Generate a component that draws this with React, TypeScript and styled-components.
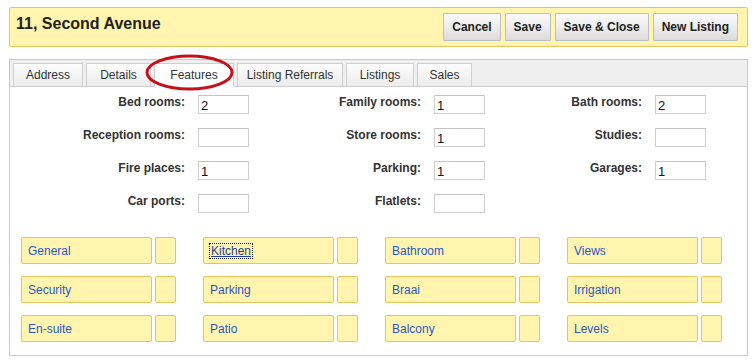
import React from "react";
import styled, { createGlobalStyle } from "styled-components";

const Global = createGlobalStyle`
  html, body { margin: 0; padding: 0; background: #fff; }
  body { font-family: "Liberation Sans", Arial, sans-serif; color: #222; }
  * { box-sizing: border-box; }
`;

const Page = styled.div`
  width: 755px;
  height: 362px;
  padding: 7px 7px 0 9px;
  display: flex;
  flex-direction: column;
`;

const Header = styled.div`
  height: 40px;
  background: #fff5ae;
  border: 1px solid #e8c45e;
  border-radius: 2px;
  display: flex;
  align-items: flex-start;
  justify-content: space-between;
  padding: 5px 9px 0 6px;
`;

const Title = styled.h1`
  margin: 0;
  padding-top: 2px;
  font-size: 16px;
  font-weight: bold;
  color: #222;
`;

const ButtonBar = styled.div`
  display: flex;
  gap: 4px;
`;

const Button = styled.button`
  height: 28px;
  padding: 0 8px;
  font-family: "Liberation Sans", Arial, sans-serif;
  font-size: 12px;
  font-weight: bold;
  color: #222;
  background: linear-gradient(#fbfbfb, #e9e9e9 60%, #dcdcdc);
  border: 1px solid #b9c0c9;
  border-radius: 1px;
`;

const Panel = styled.div`
  margin-top: 12px;
  border: 1px solid #c9c9c9;
  flex: 0 0 297px;
  display: flex;
  flex-direction: column;
`;

const TabStrip = styled.div`
  background: #efefef;
  border-bottom: 1px solid #cfcfcf;
  height: 27px;
  display: flex;
  align-items: flex-end;
  gap: 3px;
  padding-left: 3px;
`;

const Tab = styled.div<{ $active?: boolean; $w: number }>`
  position: relative;
  width: ${(p) => p.$w}px;
  height: 24px;
  margin-bottom: -1px;
  display: flex;
  align-items: center;
  justify-content: center;
  font-size: 12px;
  color: #333;
  border: 1px solid #cfcfcf;
  border-bottom: ${(p) => (p.$active ? "1px solid #fff" : "1px solid #cfcfcf")};
  background: ${(p) => (p.$active ? "#fff" : "linear-gradient(#fdfdfd, #ececec)")};
`;

const Ring = styled.svg`
  position: absolute;
  left: -10px;
  top: -10px;
  width: 89px;
  height: 37px;
  overflow: visible;
  pointer-events: none;
`;

const Body = styled.div`
  padding: 8px 0 0 0;
`;

const FormGrid = styled.div`
  display: grid;
  grid-template-columns: 188px 51px 185px 51px 170px 51px;
  row-gap: 14px;
`;

const Label = styled.label`
  font-size: 12px;
  font-weight: bold;
  color: #333;
  text-align: right;
  padding-right: 13px;
  line-height: 14px;
`;

const Field = styled.input`
  width: 51px;
  height: 19px;
  border: 1px solid #cfcfcf;
  border-top-color: #c4c4c4;
  padding: 2px 0 0 2px;
  font-family: "Liberation Sans", Arial, sans-serif;
  font-size: 13px;
  color: #111;
  background: #fff;
  outline: none;
`;

const FeatureGrid = styled.div`
  margin-top: 24px;
  padding-left: 11px;
  display: grid;
  grid-template-columns: repeat(4, 155px);
  column-gap: 27px;
  row-gap: 12px;
`;

const Feature = styled.div`
  display: flex;
  gap: 3px;
  height: 27px;
`;

const FeatureName = styled.div`
  width: 131px;
  background: #fff5ae;
  border: 1px solid #e8c45e;
  border-radius: 2px;
  display: flex;
  align-items: center;
  padding-left: 6px;
  font-size: 12px;
  color: #2b55c6;
`;

const FeatureLink = styled.span<{ $focus?: boolean }>`
  ${(p) =>
    p.$focus
      ? `text-decoration: underline; color: #1f3f9a; outline: 1px dotted #222; outline-offset: 0px; padding: 0 1px;`
      : ""}
`;

const FeatureBox = styled.div`
  width: 21px;
  background: #fff5ae;
  border: 1px solid #e8c45e;
  border-radius: 2px;
`;

const tabs: [string, number][] = [
  ["Address", 70],
  ["Details", 65],
  ["Features", 80],
  ["Listing Referrals", 106],
  ["Listings", 68],
  ["Sales", 55],
];

const fields: [string, string][] = [
  ["Bed rooms:", "2"],
  ["Family rooms:", "1"],
  ["Bath rooms:", "2"],
  ["Reception rooms:", ""],
  ["Store rooms:", "1"],
  ["Studies:", ""],
  ["Fire places:", "1"],
  ["Parking:", "1"],
  ["Garages:", "1"],
  ["Car ports:", ""],
  ["Flatlets:", ""],
];

const features = [
  "General", "Kitchen", "Bathroom", "Views",
  "Security", "Parking", "Braai", "Irrigation",
  "En-suite", "Patio", "Balcony", "Levels",
];

export default function App() {
  return (
    <>
      <Global />
      <Page>
        <Header>
          <Title>11, Second Avenue</Title>
          <ButtonBar>
            <Button>Cancel</Button>
            <Button>Save</Button>
            <Button>Save &amp; Close</Button>
            <Button>New Listing</Button>
          </ButtonBar>
        </Header>
        <Panel>
          <TabStrip>
            {tabs.map(([t, w]) => (
              <Tab key={t} $w={w} $active={t === "Features"}>
                {t}
                {t === "Features" && (
                  <Ring viewBox="0 0 89 37">
                    <ellipse cx="44.5" cy="18.5" rx="42.5" ry="16.5" fill="none" stroke="#c4121c" strokeWidth="3" />
                  </Ring>
                )}
              </Tab>
            ))}
          </TabStrip>
          <Body>
            <FormGrid>
              {fields.map(([l, v]) => (
                <React.Fragment key={l}>
                  <Label>{l}</Label>
                  <Field defaultValue={v} />
                </React.Fragment>
              ))}
            </FormGrid>
            <FeatureGrid>
              {features.map((f) => (
                <Feature key={f}>
                  <FeatureName>
                    <FeatureLink $focus={f === "Kitchen"}>{f}</FeatureLink>
                  </FeatureName>
                  <FeatureBox />
                </Feature>
              ))}
            </FeatureGrid>
          </Body>
        </Panel>
      </Page>
    </>
  );
}
